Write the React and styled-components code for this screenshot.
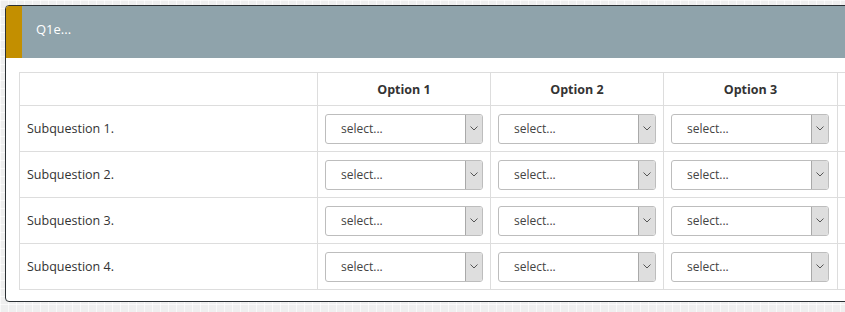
import React from "react";
import styled, { createGlobalStyle } from "styled-components";

const Global = createGlobalStyle`
  html, body {
    margin: 0;
    padding: 0;
    overflow: hidden;
  }
  body {
    font-family: "Open Sans", "Liberation Sans", sans-serif;
    background-color: #efefef;
    background-image:
      linear-gradient(rgba(255,255,255,0.6) 1px, transparent 1px),
      linear-gradient(90deg, rgba(255,255,255,0.6) 1px, transparent 1px);
    background-size: 8px 8px;
    height: 312px;
  }
`;

const Card = styled.div`
  margin: 5px 0 0 5px;
  width: 1000px;
  background: #fff;
  border: 1px solid #2b3034;
  border-radius: 4px;
  overflow: hidden;
`;

const Header = styled.div`
  display: flex;
  height: 52px;
  background: #8fa3ab;
`;

const Accent = styled.div`
  width: 16px;
  background: #c38f00;
`;

const Title = styled.div`
  padding: 14px 0 0 14px;
  color: #fff;
  font-size: 13px;
`;

const Body = styled.div`
  padding: 14px 0 11px 13px;
`;

const Table = styled.table`
  width: 1000px;
  border-collapse: collapse;
  table-layout: fixed;
  font-size: 12.5px;
  color: #333;
`;

const Col = styled.col`
  width: ${(p) => p.$w}px;
`;

const Th = styled.th`
  height: 32px;
  padding: 0;
  border: 1px solid #dddddd;
  font-weight: 700;
  text-align: center;
  color: #333;
`;

const Td = styled.td`
  height: 45px;
  padding: 0 7px;
  border: 1px solid #dddddd;
  text-align: ${(p) => (p.$label ? "left" : "center")};
  color: #333;
`;

const Select = styled.div`
  display: flex;
  width: 158px;
  height: 30px;
  box-sizing: border-box;
  border: 1px solid #bdbdbd;
  border-radius: 3px;
  background: #fff;
  overflow: hidden;
`;

const SelectText = styled.span`
  flex: 1;
  padding-left: 15px;
  line-height: 28px;
  text-align: left;
  color: #444;
  font-size: 12px;
`;

const Arrow = styled.span`
  width: 16px;
  display: flex;
  align-items: center;
  justify-content: center;
  background: #dedede;
  border-left: 1px solid #a9a9a9;
`;

const Chevron = () => (
  <svg width="8" height="5" viewBox="0 0 8 5">
    <path d="M0.5 0.5 L4 4 L7.5 0.5" fill="none" stroke="#555" strokeWidth="1" />
  </svg>
);

const Dropdown = () => (
  <Select>
    <SelectText>select...</SelectText>
    <Arrow>
      <Chevron />
    </Arrow>
  </Select>
);

const options = ["Option 1", "Option 2", "Option 3"];
const rows = ["Subquestion 1.", "Subquestion 2.", "Subquestion 3.", "Subquestion 4."];

export default function App() {
  return (
    <>
      <Global />
      <Card>
        <Header>
          <Accent />
          <Title>Q1e...</Title>
        </Header>
        <Body>
          <Table>
            <colgroup>
              <Col $w={298} />
              <Col $w={173} />
              <Col $w={173} />
              <Col $w={174} />
              <Col $w={182} />
            </colgroup>
            <thead>
              <tr>
                <Th />
                {options.map((o) => (
                  <Th key={o}>{o}</Th>
                ))}
                <Th />
              </tr>
            </thead>
            <tbody>
              {rows.map((r) => (
                <tr key={r}>
                  <Td $label>{r}</Td>
                  {options.map((o) => (
                    <Td key={o}>
                      <Dropdown />
                    </Td>
                  ))}
                  <Td />
                </tr>
              ))}
            </tbody>
          </Table>
        </Body>
      </Card>
    </>
  );
}
